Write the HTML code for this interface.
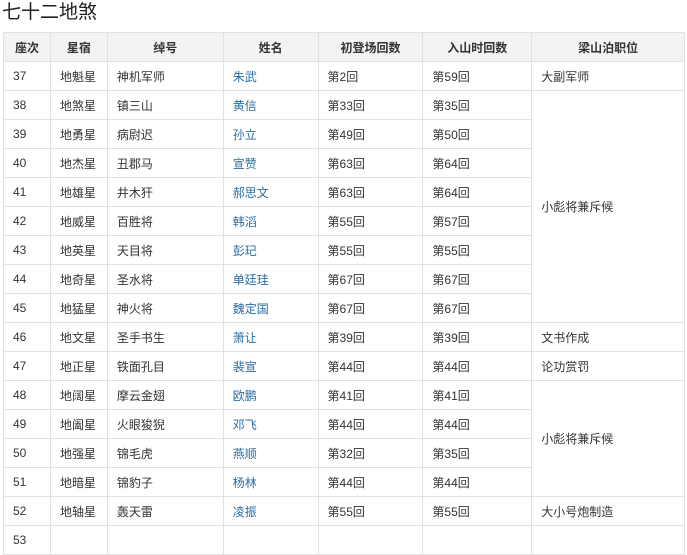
<!DOCTYPE html>
<html><head><meta charset="utf-8"><style>
body{margin:0;background:#fff;font-family:"Liberation Sans","Noto Sans CJK SC",sans-serif;color:#333;}
h2{margin:0;position:absolute;left:2px;top:0px;font-size:19px;font-weight:normal;color:#222;line-height:26px;}
table{position:absolute;left:3px;top:32px;border-collapse:collapse;font-size:12px;width:682px;}
td,th{border:1px solid #e1e1e1;height:28px;padding:0 0 0 9px;text-align:left;}
th{background:#f3f3f3;text-align:center;padding:0;font-weight:bold;color:#333;}
td a{color:#2b6da3;text-decoration:none;}
</style></head><body>
<h2>七十二地煞</h2>
<table>
<colgroup><col style="width:47px"><col style="width:57px"><col style="width:116px"><col style="width:95px"><col style="width:105px"><col style="width:109px"><col style="width:153px"></colgroup>
<tr><th>座次</th><th>星宿</th><th>绰号</th><th>姓名</th><th>初登场回数</th><th>入山时回数</th><th>梁山泊职位</th></tr>
<tr><td>37</td><td>地魁星</td><td>神机军师</td><td><a>朱武</a></td><td>第2回</td><td>第59回</td><td>大副军师</td></tr>
<tr><td>38</td><td>地煞星</td><td>镇三山</td><td><a>黄信</a></td><td>第33回</td><td>第35回</td><td rowspan="8">小彪将兼斥候</td></tr>
<tr><td>39</td><td>地勇星</td><td>病尉迟</td><td><a>孙立</a></td><td>第49回</td><td>第50回</td></tr>
<tr><td>40</td><td>地杰星</td><td>丑郡马</td><td><a>宣赞</a></td><td>第63回</td><td>第64回</td></tr>
<tr><td>41</td><td>地雄星</td><td>井木犴</td><td><a>郝思文</a></td><td>第63回</td><td>第64回</td></tr>
<tr><td>42</td><td>地威星</td><td>百胜将</td><td><a>韩滔</a></td><td>第55回</td><td>第57回</td></tr>
<tr><td>43</td><td>地英星</td><td>天目将</td><td><a>彭玘</a></td><td>第55回</td><td>第55回</td></tr>
<tr><td>44</td><td>地奇星</td><td>圣水将</td><td><a>单廷珪</a></td><td>第67回</td><td>第67回</td></tr>
<tr><td>45</td><td>地猛星</td><td>神火将</td><td><a>魏定国</a></td><td>第67回</td><td>第67回</td></tr>
<tr><td>46</td><td>地文星</td><td>圣手书生</td><td><a>萧让</a></td><td>第39回</td><td>第39回</td><td>文书作成</td></tr>
<tr><td>47</td><td>地正星</td><td>铁面孔目</td><td><a>裴宣</a></td><td>第44回</td><td>第44回</td><td>论功赏罚</td></tr>
<tr><td>48</td><td>地阔星</td><td>摩云金翅</td><td><a>欧鹏</a></td><td>第41回</td><td>第41回</td><td rowspan="4">小彪将兼斥候</td></tr>
<tr><td>49</td><td>地阖星</td><td>火眼狻猊</td><td><a>邓飞</a></td><td>第44回</td><td>第44回</td></tr>
<tr><td>50</td><td>地强星</td><td>锦毛虎</td><td><a>燕顺</a></td><td>第32回</td><td>第35回</td></tr>
<tr><td>51</td><td>地暗星</td><td>锦豹子</td><td><a>杨林</a></td><td>第44回</td><td>第44回</td></tr>
<tr><td>52</td><td>地轴星</td><td>轰天雷</td><td><a>凌振</a></td><td>第55回</td><td>第55回</td><td>大小号炮制造</td></tr>
<tr><td>53</td><td></td><td></td><td></td><td></td><td></td><td></td></tr>
</table>
</body></html>
